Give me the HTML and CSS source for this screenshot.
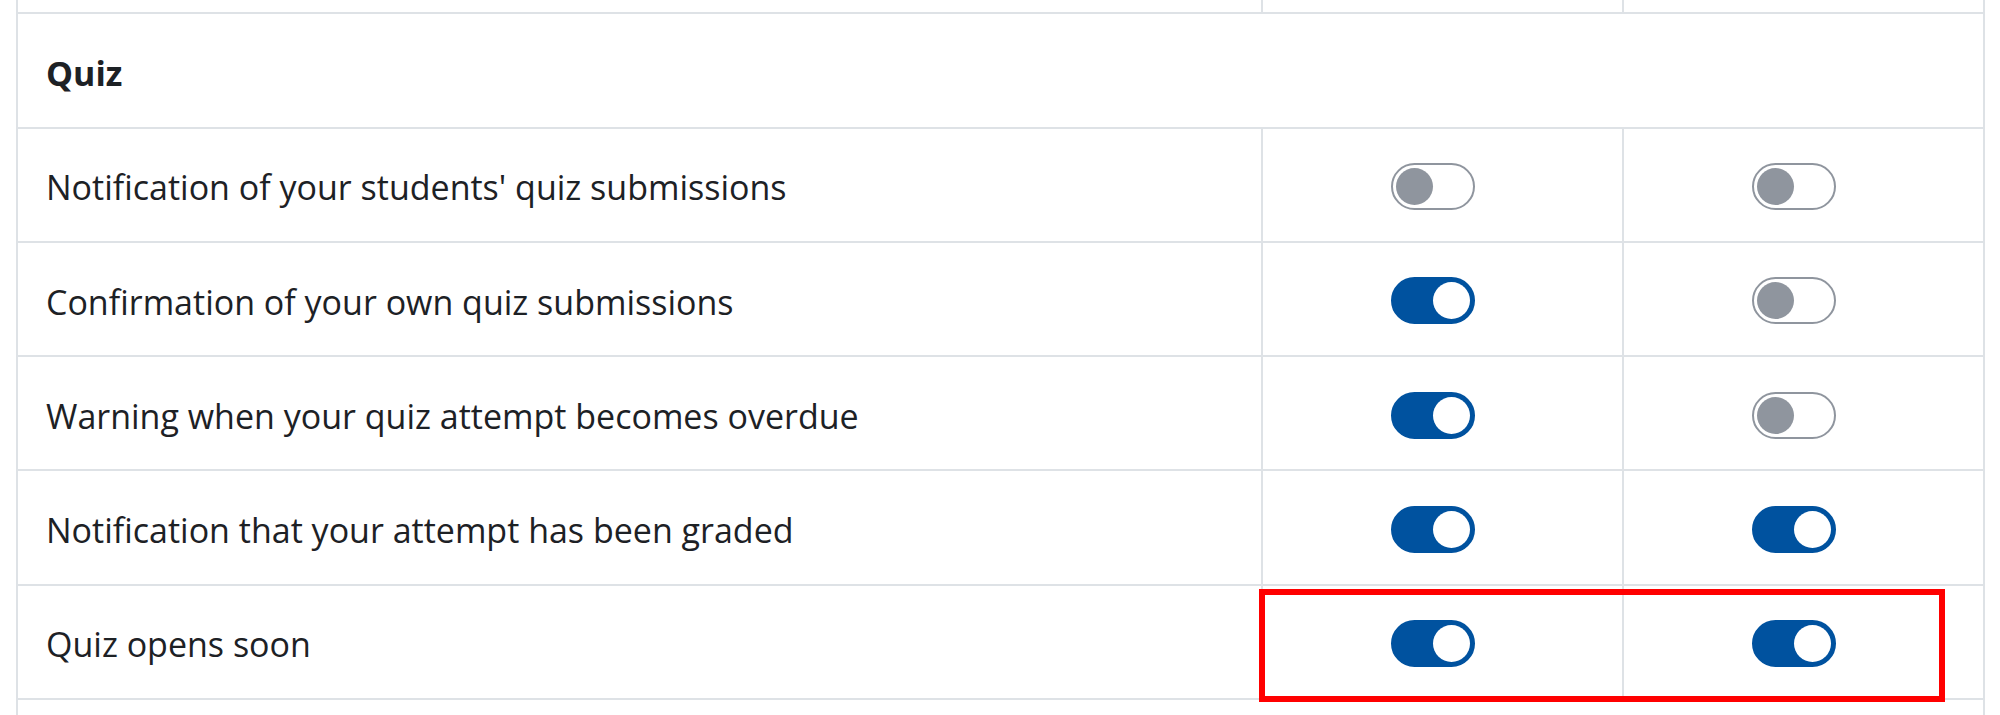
FILE: index.html
```html
<!DOCTYPE html>
<html lang="en">
<head>
<meta charset="utf-8">
<title>Notification preferences</title>
<link rel="stylesheet" href="styles.css">
</head>
<body>
<main class="page">
  <table class="prefs">
    <colgroup>
      <col class="col-name">
      <col class="col-proc">
      <col class="col-proc">
    </colgroup>
    <tbody>
      <tr class="row">
        <td class="cell-name"></td>
        <td class="cell-toggle"></td>
        <td class="cell-toggle"></td>
      </tr>
      <tr class="row">
        <th class="cell-section" colspan="3">Quiz</th>
      </tr>
      <tr class="row">
        <td class="cell-name">Notification of your students' quiz submissions</td>
        <td class="cell-toggle"><label class="switch"><input type="checkbox"><span class="track"><span class="knob"></span></span></label></td>
        <td class="cell-toggle"><label class="switch"><input type="checkbox"><span class="track"><span class="knob"></span></span></label></td>
      </tr>
      <tr class="row">
        <td class="cell-name">Confirmation of your own quiz submissions</td>
        <td class="cell-toggle"><label class="switch"><input type="checkbox" checked><span class="track"><span class="knob"></span></span></label></td>
        <td class="cell-toggle"><label class="switch"><input type="checkbox"><span class="track"><span class="knob"></span></span></label></td>
      </tr>
      <tr class="row">
        <td class="cell-name">Warning when your quiz attempt becomes overdue</td>
        <td class="cell-toggle"><label class="switch"><input type="checkbox" checked><span class="track"><span class="knob"></span></span></label></td>
        <td class="cell-toggle"><label class="switch"><input type="checkbox"><span class="track"><span class="knob"></span></span></label></td>
      </tr>
      <tr class="row">
        <td class="cell-name">Notification that your attempt has been graded</td>
        <td class="cell-toggle"><label class="switch"><input type="checkbox" checked><span class="track"><span class="knob"></span></span></label></td>
        <td class="cell-toggle"><label class="switch"><input type="checkbox" checked><span class="track"><span class="knob"></span></span></label></td>
      </tr>
      <tr class="row">
        <td class="cell-name">Quiz opens soon</td>
        <td class="cell-toggle"><label class="switch"><input type="checkbox" checked><span class="track"><span class="knob"></span></span></label></td>
        <td class="cell-toggle"><label class="switch"><input type="checkbox" checked><span class="track"><span class="knob"></span></span></label></td>
      </tr>
      <tr class="row-partial">
        <th class="cell-section" colspan="3"></th>
      </tr>
    </tbody>
  </table>
  <div class="highlight" aria-hidden="true"></div>
</main>
</body>
</html>
```
FILE: styles.css
```css
html, body {
  margin: 0;
  padding: 0;
  background: #ffffff;
}

body {
  font-family: "Open Sans", "Noto Sans", sans-serif;
  color: #1d2125;
  overflow: hidden;
  height: 715px;
}

.page {
  position: relative;
  display: flow-root;
  height: 715px;
  overflow: hidden;
  padding-left: 16px;
}

.prefs {
  border-collapse: collapse;
  table-layout: fixed;
  width: 1969px;
  margin-top: -102px;
  font-size: 34px;
}

.col-name { width: 1245px; }
.col-proc { width: 361px; }

.row { height: 114.3px; }
.row-partial { height: 20px; }

.prefs td,
.prefs th {
  border: 2px solid #dee2e6;
  vertical-align: middle;
  padding: 5px 0 0 28px;
}

.row-partial th {
  border-bottom: 0;
}

.cell-section {
  text-align: left;
  font-weight: 700;
}

.cell-name {
  font-weight: 400;
}

.prefs .cell-toggle {
  padding: 0;
  text-align: center;
}

.switch {
  display: inline-block;
  margin-right: 19px;
  vertical-align: middle;
  line-height: 0;
}

.switch input {
  position: absolute;
  opacity: 0;
  width: 0;
  height: 0;
  margin: 0;
}

.track {
  box-sizing: border-box;
  display: flex;
  align-items: center;
  justify-content: flex-start;
  width: 84px;
  height: 47px;
  padding: 0 3px;
  border: 2px solid #8f959e;
  border-radius: 24px;
  background: #ffffff;
}

.knob {
  width: 37px;
  height: 37px;
  border-radius: 50%;
  background: #8f959e;
}

.switch input:checked + .track {
  justify-content: flex-end;
  background: #00529f;
  border-color: #00529f;
}

.switch input:checked + .track .knob {
  background: #ffffff;
}

.highlight {
  position: absolute;
  left: 1259px;
  top: 589px;
  width: 686px;
  height: 113px;
  box-sizing: border-box;
  border: 6px solid #ff0000;
}
```
